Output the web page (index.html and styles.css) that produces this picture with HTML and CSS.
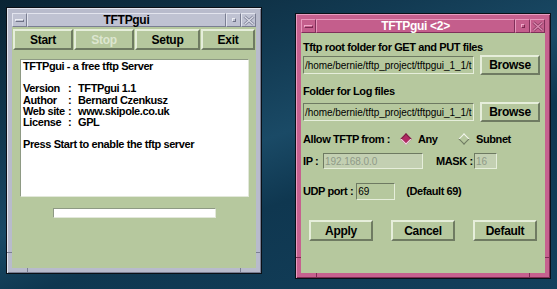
FILE: index.html
```html
<!DOCTYPE html>
<html>
<head>
<meta charset="utf-8">
<link rel="stylesheet" href="styles.css">
</head>
<body>
<div class="win win1">
  <div class="tbar">
    <div class="tbtn"><span class="minbar"></span></div>
    <div class="ttitle">TFTPgui</div>
    <div class="tbtn"><span class="maxdot"></span></div>
    <div class="tbtn"><svg width="12" height="11" viewBox="0 0 12 11"><path d="M1.5 1.5 L10.5 9.5 M10.5 1.5 L1.5 9.5" stroke="#80849a" stroke-width="3" fill="none"/><path d="M1.5 1.5 L10.5 9.5 M10.5 1.5 L1.5 9.5" stroke="#dcdee8" stroke-width="1.2" fill="none"/></svg></div>
  </div>
  <div class="body body1">
    <div class="btnrow">
      <div class="btn">Start</div>
      <div class="btn dis">Stop</div>
      <div class="btn">Setup</div>
      <div class="btn">Exit</div>
    </div>
    <div class="textarea">
      <div class="ln">TFTPgui - a free tftp Server</div>
      <div class="ln">&nbsp;</div>
      <div class="ln"><span class="k">Version</span><span class="c">:</span>TFTPgui 1.1</div>
      <div class="ln"><span class="k">Author</span><span class="c">:</span>Bernard Czenkusz</div>
      <div class="ln"><span class="k">Web site</span><span class="c">:</span>www.skipole.co.uk</div>
      <div class="ln"><span class="k">License</span><span class="c">:</span>GPL</div>
      <div class="ln">&nbsp;</div>
      <div class="ln">Press Start to enable the tftp server</div>
    </div>
    <div class="progress"></div>
  </div>
  <span class="tick tb1"></span><span class="tick tb2"></span>
  <span class="tick ts1"></span><span class="tick ts2"></span>
</div>

<div class="win win2">
  <div class="tbar">
    <div class="tbtn"><span class="minbar"></span></div>
    <div class="ttitle">TFTPgui &lt;2&gt;</div>
    <div class="tbtn"><span class="maxdot"></span></div>
    <div class="tbtn"><svg width="12" height="11" viewBox="0 0 12 11"><path d="M1.5 1.5 L10.5 9.5 M10.5 1.5 L1.5 9.5" stroke="#8c3a62" stroke-width="3" fill="none"/><path d="M1.5 1.5 L10.5 9.5 M10.5 1.5 L1.5 9.5" stroke="#dc8cb2" stroke-width="1.2" fill="none"/></svg></div>
  </div>
  <div class="body body2">
    <div class="lbl l1">Tftp root folder for GET and PUT files</div>
    <div class="frow">
      <div class="entry path">/home/bernie/tftp_project/tftpgui_1_1/t</div>
      <div class="btn browse">Browse</div>
    </div>
    <div class="lbl l2">Folder for Log files</div>
    <div class="frow">
      <div class="entry path">/home/bernie/tftp_project/tftpgui_1_1/t</div>
      <div class="btn browse">Browse</div>
    </div>
    <div class="allow">
      <span class="allowlbl">Allow TFTP from :</span>
      <span class="radio on"></span><span class="rlbl any">Any</span>
      <span class="radio"></span><span class="rlbl">Subnet</span>
    </div>
    <div class="iprow">
      <span class="iplbl">IP :</span>
      <div class="entry dim ipent">192.168.0.0</div>
      <span class="masklbl">MASK :</span>
      <div class="entry dim maskent">16</div>
    </div>
    <div class="udprow">
      <span>UDP port :</span>
      <div class="entry udpent">69</div>
      <span class="deflbl">(Default 69)</span>
    </div>
    <div class="actrow">
      <div class="btn act">Apply</div>
      <div class="btn act">Cancel</div>
      <div class="btn act">Default</div>
    </div>
  </div>
  <span class="tick tb1"></span><span class="tick tb2"></span>
  <span class="tick ts1"></span><span class="tick ts2"></span>
</div>
</body>
</html>
```

FILE: styles.css
```css
html, body {
  margin: 0;
  padding: 0;
}
body {
  width: 557px;
  height: 289px;
  overflow: hidden;
  position: relative;
  background: linear-gradient(160deg, #0a2434 0%, #123a52 30%, #1a4a66 48%, #0f3750 62%, #13405c 100%);
  font-family: "Liberation Sans", Arial, sans-serif;
  font-weight: bold;
  font-size: 11px;
  letter-spacing: -0.4px;
  color: #000;
}
.win {
  position: absolute;
  box-sizing: border-box;
  border: 1px solid #0a0f16;
  padding: 5px;
  display: flex;
  flex-direction: column;
}
.win1 {
  left: 6px;
  top: 7px;
  width: 256px;
  height: 267px;
  background: #b8bbcc;
  box-shadow: inset 1px 1px 0 #e4e6ef, inset -1px -1px 0 #7a7e92;
}
.win2 {
  left: 295px;
  top: 13px;
  width: 256px;
  height: 266px;
  background: #c6618f;
  box-shadow: inset 1px 1px 0 #e89cc0, inset -1px -1px 0 #7e2c54;
}
.tick {
  position: absolute;
  background: #7a7e92;
}
.win2 .tick { background: #7e2c54; }
.tb1, .tb2 { bottom: 0; width: 1px; height: 5px; }
.tb1 { left: 20px; }
.tb2 { right: 20px; }
.ts1, .ts2 { bottom: 20px; width: 5px; height: 1px; }
.ts1 { left: 0; }
.ts2 { right: 0; }
.tbar {
  display: flex;
  height: 14px;
  flex: none;
}
.tbtn, .ttitle {
  box-sizing: border-box;
  border: 1px solid;
  border-color: #e2e4ee #7a7e92 #7a7e92 #e2e4ee;
  background: #bfc2d2;
}
.tbtn {
  width: 15px;
  display: flex;
  align-items: center;
  justify-content: center;
}
.ttitle {
  flex: 1;
  text-align: center;
  line-height: 12px;
  font-size: 12px;
  letter-spacing: -0.3px;
}
.win2 .tbtn, .win2 .ttitle {
  background: #c45e8c;
  border-color: #e898bc #80305a #80305a #e898bc;
}
.win2 .ttitle { color: #fff; }
.minbar {
  width: 9px;
  height: 3px;
  box-sizing: border-box;
  border: 1px solid;
  border-color: #eceef4 #6e7286 #6e7286 #eceef4;
}
.maxdot {
  width: 4px;
  height: 4px;
  box-sizing: border-box;
  border: 1px solid;
  border-color: #eceef4 #6e7286 #6e7286 #eceef4;
}
.win2 .minbar, .win2 .maxdot {
  border-color: #f0a8c8 #7a2850 #7a2850 #f0a8c8;
}
.body {
  flex: 1;
  background: #b6c89e;
  display: flex;
  flex-direction: column;
}
.btn {
  box-sizing: border-box;
  border: 2px solid;
  border-color: #e6eedb #6f7b62 #6f7b62 #e6eedb;
  background: #b6c89e;
  display: flex;
  align-items: center;
  justify-content: center;
  font-size: 12px;
  letter-spacing: -0.3px;
}
.btn.dis { color: #dde6d0; }
.btnrow {
  margin-top: 2px;
  height: 21px;
  display: grid;
  grid-template-columns: 61px 61px 66px 1fr;
  padding-left: 1px;
}
.btnrow .btn { margin-right: 1px; }
.textarea {
  margin: 9px 0 0 8px;
  width: 229px;
  height: 138px;
  box-sizing: border-box;
  border: 1px solid;
  border-color: #8e9a84 #e2e8da #e2e8da #8e9a84;
  background: #fff;
  padding: 1px 0 0 2px;
  font-size: 11px;
}
.ln {
  line-height: 11.2px;
  height: 11.2px;
  white-space: nowrap;
}
.k { display: inline-block; width: 45px; }
.c { display: inline-block; width: 10px; }
.progress {
  margin: 11px auto 0;
  width: 163px;
  height: 10px;
  box-sizing: border-box;
  border: 1px solid;
  border-color: #8e9a84 #e2e8da #e2e8da #8e9a84;
  background: #fff;
}
.body2 {
  padding-left: 2px;
}
.lbl {
  line-height: 14px;
  height: 14px;
  white-space: nowrap;
}
.l1 { margin-top: 7px; }
.l2 { margin-top: 9px; }
.frow {
  display: flex;
  align-items: center;
  height: 20px;
  margin-top: 1px;
}
.l2 + .frow { margin-top: 4px; }
.entry {
  box-sizing: border-box;
  border: 1px solid;
  border-color: #6e7a62 #e6eedb #e6eedb #6e7a62;
  background: #b6c89e;
  overflow: hidden;
  white-space: nowrap;
  font-weight: normal;
  font-size: 10px;
  letter-spacing: -0.05px;
  padding-left: 1px;
  display: flex;
  align-items: center;
}
.entry.path {
  width: 171px;
  height: 18px;
}
.browse {
  margin-left: 6px;
  width: 60px;
  height: 20px;
}
.allow {
  margin-top: 10px;
  height: 14px;
  display: flex;
  align-items: center;
  white-space: nowrap;
}
.allowlbl { width: 97px; }
.radio {
  width: 8px;
  height: 8px;
  box-sizing: border-box;
  transform: rotate(45deg);
  border: 1px solid;
  background: #b6c89e;
  margin-left: 2px;
  margin-right: 8px;
}
.radio.on {
  background: #b02a62;
  border-color: #7a1c44 #f0e0e8 #f0e0e8 #7a1c44;
}
.radio:not(.on) {
  border-color: #f4f6ee #6e7a62 #6e7a62 #f4f6ee;
}
.rlbl.any { width: 40px; }
.iprow {
  margin-top: 7px;
  height: 16px;
  display: flex;
  align-items: center;
  white-space: nowrap;
}
.iplbl { width: 20px; }
.entry.dim {
  color: #8f9a88;
  background: #c3d0b2;
  height: 16px;
}
.ipent { width: 100px; }
.masklbl { margin-left: 13px; width: 38px; }
.maskent { width: 23px; }
.udprow {
  margin-top: 14px;
  height: 16px;
  display: flex;
  align-items: center;
  white-space: nowrap;
}
.udpent {
  margin-left: 3px;
  width: 39px;
  height: 17px;
}
.deflbl { margin-left: 11px; }
.actrow {
  margin-top: 21px;
  display: flex;
  gap: 18px;
  padding-left: 6px;
}
.act {
  width: 64px;
  height: 21px;
}
```
